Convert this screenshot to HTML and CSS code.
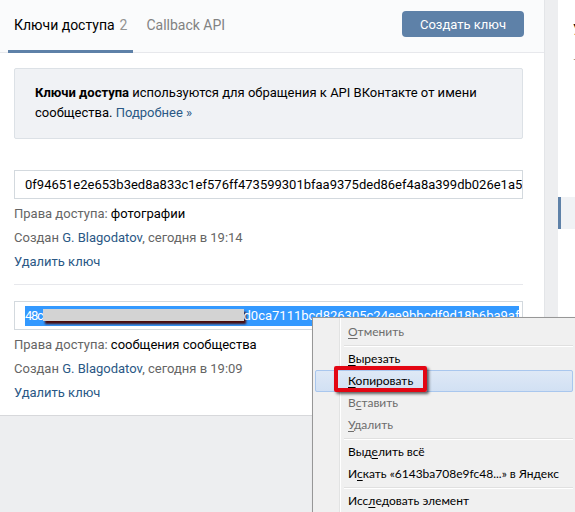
FILE: index.html
```html
<!DOCTYPE html>
<html lang="ru">
<head>
<meta charset="utf-8">
<link rel="stylesheet" href="styles.css">
</head>
<body>
<div class="page">
  <div class="main">
    <div class="tabs">
      <div class="tab tab-active">Ключи доступа <span class="count">2</span></div>
      <div class="tab">Callback API</div>
      <div class="tabs-spacer"></div>
      <button class="btn">Создать ключ</button>
    </div>
    <div class="content">
      <div class="info"><b>Ключи доступа</b> используются для обращения к API ВКонтакте от имени сообщества. <a class="link">Подробнее »</a></div>
      <div class="key-block key-first">
        <div class="key-input">0f94651e2e653b3ed8a833c1ef576ff473599301bfaa9375ded86ef4a8a399db026e1a5e</div>
        <div class="row"><span class="muted">Права доступа:</span> фотографии</div>
        <div class="row"><span class="muted">Создан</span> <a class="link">G. Blagodatov</a><span class="muted">, сегодня в 19:14</span></div>
        <div class="row"><a class="link">Удалить ключ</a></div>
      </div>
      <div class="key-block key-last">
        <div class="key-input"><span class="sel"><span class="tight">48c</span><span class="redact"></span>d0ca7111bcd826305c24ee9bbcdf9d18b6ba9af</span></div>
        <div class="row"><span class="muted">Права доступа:</span> сообщения сообщества</div>
        <div class="row"><span class="muted">Создан</span> <a class="link">G. Blagodatov</a><span class="muted">, сегодня в 19:09</span></div>
        <div class="row"><a class="link">Удалить ключ</a></div>
      </div>
    </div>
  </div>
  <div class="side">
    <div class="side-title">Управление</div>
    <div class="side-sub">—</div>
    <div class="side-item side-active">Работа с API</div>
  </div>
</div>

<div class="ctx">
  <div class="ctx-item disabled"><u>О</u>тменить</div>
  <div class="ctx-sep"></div>
  <div class="ctx-item"><u>В</u>ырезать</div>
  <div class="ctx-item hover"><u>К</u>опировать<span class="redbox"></span></div>
  <div class="ctx-item disabled">В<u>с</u>тавить</div>
  <div class="ctx-item disabled"><u>У</u>далить</div>
  <div class="ctx-sep"></div>
  <div class="ctx-item">Выд<u>е</u>лить всё</div>
  <div class="ctx-item">И<u>с</u>кать «6143ba708e9fc48...» в Яндекс</div>
  <div class="ctx-sep"></div>
  <div class="ctx-item">Исс<u>л</u>едовать элемент</div>
</div>
</body>
</html>
```

FILE: styles.css
```css
html, body {
  margin: 0;
  padding: 0;
  overflow: hidden;
  background: #edeef0;
  font-family: Roboto, "Open Sans", "Liberation Sans", sans-serif;
  font-size: 13px;
  color: #000;
}

.page {
  display: grid;
  grid-template-columns: 545px 1fr;
  column-gap: 13px;
  align-items: start;
}

.main {
  background: #fff;
  border-right: 1px solid #e3e5e8;
  border-bottom: 1px solid #d7d8db;
  height: 416px;
  box-sizing: border-box;
}

.tabs {
  display: flex;
  align-items: center;
  height: 53px;
  box-sizing: border-box;
  padding: 0 20px 0 8px;
  background: #fafbfc;
  border-bottom: 1px solid #e7e8ec;
}

.tab {
  height: 53px;
  box-sizing: border-box;
  padding: 0 6px 3px;
  display: flex;
  align-items: center;
  color: #828282;
  font-size: 14px;
  margin-right: 7px;
}

.tab-active {
  color: #000;
  border-bottom: 3px solid #5e81a8;
  padding-bottom: 0;
  margin-bottom: -1px;
}

.count {
  color: #939393;
  margin-left: 5px;
}

.tabs-spacer { flex: 1; }

.btn {
  font: inherit;
  font-size: 13px;
  color: #fff;
  background: #5e81a8;
  border: none;
  border-radius: 4px;
  width: 122px;
  height: 26px;
  padding: 0;
  margin-bottom: 4px;
}

.content {
  padding: 15px 21px 0 14px;
}

.info {
  background: #f0f2f5;
  border: 1px solid #dce1e6;
  border-radius: 2px;
  padding: 14px 20px 15px;
  line-height: 20px;
  color: #000;
}

.link { color: #2a5885; }
.muted { color: #656565; }

.key-block {
  padding-bottom: 10px;
}

.key-first {
  margin-top: 31px;
  border-bottom: 1px solid #e7e8ec;
}

.key-last {
  margin-top: 16px;
}

.key-input {
  height: 29px;
  box-sizing: border-box;
  border: 1px solid #d3d9de;
  padding: 0 10px;
  line-height: 27px;
  white-space: nowrap;
  overflow: hidden;
  margin-bottom: 3px;
}

.sel {
  background: #3399ff;
  color: #fff;
  padding: 2px 0 3px;
}

.tight { letter-spacing: -1.3px; }

.redact {
  display: inline-block;
  width: 201px;
  height: 12px;
  background: #d3d3d3;
  vertical-align: -1px;
  box-shadow: 2px 3px 2px #4a0b0b;
}

.row {
  height: 24px;
  line-height: 24px;
}

.side {
  background: #fff;
  height: 416px;
  padding-top: 19px;
  box-sizing: border-box;
  white-space: nowrap;
  overflow: hidden;
}

.side-title {
  height: 22px;
  line-height: 22px;
  padding-left: 15px;
  font-size: 14px;
  color: #000;
}

.side-sub {
  height: 22px;
  line-height: 22px;
  padding-left: 15px;
  margin-top: 8px;
  color: #939393;
  font-size: 12px;
}

.side-item {
  height: 32px;
  line-height: 32px;
  padding-left: 20px;
  color: #000;
}

.side-active {
  margin-top: 126px;
  background: #f0f2f5;
  border-left: 3px solid #5e81a8;
}

.ctx {
  position: absolute;
  left: 312px;
  top: 317px;
  width: 264px;
  height: 220px;
  box-sizing: border-box;
  background: #f0f0f0;
  border: 1px solid #979797;
  padding: 3px 2px;
  font-family: Lato, "Noto Sans", sans-serif;
  font-size: 12px;
  color: #000;
  box-shadow: 2px 2px 3px rgba(0,0,0,0.25);
  background-image: linear-gradient(to right, transparent 26px, #e2e3e3 26px, #e2e3e3 27px, #fff 27px, #fff 28px, transparent 28px);
}

.ctx-item {
  position: relative;
  height: 22px;
  line-height: 22px;
  padding-left: 33px;
  white-space: nowrap;
}

.ctx-item u { text-decoration-thickness: 1px; text-underline-offset: 2px; }

.disabled { color: #6d6d6d; }

.hover {
  background: linear-gradient(#dfe9f6, #d1e0f3);
  outline: 1px solid #a9c7ee;
  outline-offset: -1px;
  border-radius: 2px;
}

.ctx-sep {
  height: 5px;
  margin-left: 29px;
  background: linear-gradient(transparent 2px, #e0e0e0 2px, #e0e0e0 3px, #fff 3px, #fff 4px, transparent 4px);
}

.redbox {
  position: absolute;
  left: 19px;
  top: -4px;
  width: 93px;
  height: 26px;
  box-sizing: border-box;
  border: 4px solid #e30613;
  border-radius: 2px;
  box-shadow: 2px 2px 3px rgba(0,0,0,0.6);
}
```
